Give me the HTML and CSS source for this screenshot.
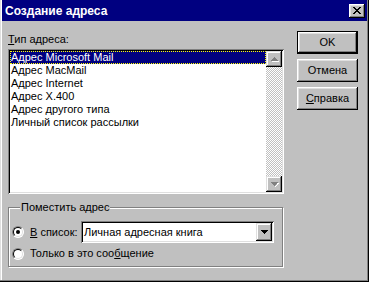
FILE: index.html
```html
<!DOCTYPE html>
<html lang="ru">
<head>
<meta charset="utf-8">
<title>Создание адреса</title>
<link rel="stylesheet" href="styles.css">
</head>
<body>
<div class="window">
  <div class="titlebar">
    <span class="title">Создание адреса</span>
    <span class="close">
      <svg width="8" height="7" viewBox="0 0 8 7" shape-rendering="crispEdges">
        <path d="M0 0h2v1H0zM6 0h2v1H6zM1 1h2v1H1zM5 1h2v1H5zM2 2h4v1H2zM3 3h2v1H3zM2 4h4v1H2zM1 5h2v1H1zM5 5h2v1H5zM0 6h2v1H0zM6 6h2v1H6z" fill="#000"/>
      </svg>
    </span>
  </div>
  <div class="body">
    <div class="left">
      <div class="label"><u>Т</u>ип адреса:</div>
      <div class="listbox">
        <ul class="items">
          <li class="sel">Адрес Microsoft Mail</li>
          <li>Адрес MacMail</li>
          <li>Адрес Internet</li>
          <li>Адрес X.400</li>
          <li>Адрес другого типа</li>
          <li>Личный список рассылки</li>
        </ul>
        <div class="vscroll">
          <div class="sbtn">
            <svg width="8" height="5" viewBox="0 0 8 5" shape-rendering="crispEdges">
              <path d="M4 1h1v1h1v1h1v1h1v1H1V4h6V3H6V2H5z" fill="#fff"/>
              <path d="M3 0h1v1h1v1h1v1h1v1H0V3h1V2h1V1h1z" fill="#808080"/>
            </svg>
          </div>
          <div class="track"></div>
          <div class="sbtn">
            <svg width="8" height="5" viewBox="0 0 8 5" shape-rendering="crispEdges">
              <path d="M1 1h7v1H7v1H6v1H5v1H4V4h1V3h1V2h1z" fill="#fff"/>
              <path d="M0 0h7v1H6v1H5v1H4v1H3V3H2V2H1V1H0z" fill="#808080"/>
            </svg>
          </div>
        </div>
      </div>
      <fieldset class="group">
        <legend>Поместить адрес</legend>
        <div class="row r1">
          <span class="radio checked"></span>
          <span class="rlabel fixed"><u>В</u> список:</span>
          <div class="combo">
            <span class="ctext">Личная адресная книга</span>
            <span class="cbtn">
              <svg width="7" height="4" viewBox="0 0 7 4" shape-rendering="crispEdges">
                <path d="M0 0h7v1H6v1H5v1H4v1H3V3H2V2H1V1H0z" fill="#000"/>
              </svg>
            </span>
          </div>
        </div>
        <div class="row r2">
          <span class="radio"></span>
          <span class="rlabel">Только в это соо<u>б</u>щение</span>
        </div>
      </fieldset>
    </div>
    <div class="right">
      <div class="btn default">OK</div>
      <div class="btn">Отмена</div>
      <div class="btn"><span><u>С</u>правка</span></div>
    </div>
  </div>
</div>
</body>
</html>
```

FILE: styles.css
```css
* { box-sizing: border-box; }

body {
  margin: 0;
  font-family: "Liberation Sans", Arial, sans-serif;
  font-size: 11px;
  color: #000;
  background: #c0c0c0;
}

u { text-decoration: underline; text-underline-offset: 1px; }

.window {
  width: 369px;
  height: 282px;
  background: #c0c0c0;
  padding: 0 2px 2px 2px;
  box-shadow: inset -1px -1px #000, inset -2px -2px #808080, inset 1px 0 #dfdfdf, inset 2px 0 #fff;
  display: flex;
  flex-direction: column;
}

.titlebar {
  height: 21px;
  background: #000080;
  color: #fff;
  display: flex;
  align-items: center;
  justify-content: space-between;
  padding: 0 2px 0 3px;
  flex: none;
}

.title {
  font-weight: bold;
  font-size: 12px;
  line-height: 14px;
  padding-top: 1px;
}

.close {
  width: 16px;
  height: 14px;
  background: #c0c0c0;
  box-shadow: inset -1px -1px #000, inset 1px 1px #fff, inset -2px -2px #808080, inset 2px 2px #dfdfdf;
  display: flex;
  align-items: center;
  justify-content: center;
  padding-left: 0;
}
.close svg { display: block; margin-left: -1px; }

.body {
  display: flex;
  padding: 10px 0 0 6px;
}

.left {
  width: 276px;
  display: flex;
  flex-direction: column;
}

.label {
  line-height: 13px;
  margin-top: 2px;
  padding-left: 0;
}

.listbox {
  margin-top: 3px;
  height: 145px;
  padding: 2px;
  background: #fff;
  box-shadow: inset 1px 1px #808080, inset -1px -1px #fff, inset 2px 2px #000, inset -2px -2px #dfdfdf;
  display: flex;
}

.items {
  list-style: none;
  margin: 0;
  padding: 0;
  flex: 1;
}

.items li {
  height: 13px;
  line-height: 13px;
  padding-left: 1px;
  white-space: nowrap;
}

.items li.sel {
  background: #000080;
  color: #fff;
  outline: 1px dotted #ffff00;
  outline-offset: -1px;
}

.vscroll {
  width: 16px;
  display: flex;
  flex-direction: column;
}

.sbtn {
  height: 16px;
  flex: none;
  background: #c0c0c0;
  box-shadow: inset -1px -1px #000, inset 1px 1px #dfdfdf, inset -2px -2px #808080, inset 2px 2px #fff;
  display: flex;
  align-items: center;
  justify-content: center;
}
.sbtn svg { display: block; margin-left: 1px; }

.track {
  flex: 1;
  background-color: #c0c0c0;
  background-image: conic-gradient(#fff 25%, #c0c0c0 0 50%, #fff 0 75%, #c0c0c0 0);
  background-size: 2px 2px;
}

.group {
  margin: 7px 0 0 0;
  padding: 7px 0 6px 3px;
  border: 1px solid #808080;
  width: 275px;
  box-shadow: 1px 1px 0 #fff, inset 1px 1px 0 #fff;
  min-width: 0;
}

.group legend {
  margin-left: 8px;
  padding: 0 1px;
  line-height: 13px;
  background: #c0c0c0;
}

.row {
  display: flex;
  align-items: center;
}

.r1 { height: 22px; }
.r2 { height: 13px; margin-top: 4px; }

.radio {
  width: 12px;
  height: 12px;
  border-radius: 50%;
  flex: none;
  border: 1px solid;
  border-color: #808080 #fff #fff #808080;
  transform: rotate(0deg);
  position: relative;
  background: #fff;
}
.radio::before {
  content: "";
  position: absolute;
  inset: 0;
  border-radius: 50%;
  border: 1px solid;
  border-color: #000 #dfdfdf #dfdfdf #000;
}
.radio.checked::after {
  content: "";
  position: absolute;
  left: 3px;
  top: 3px;
  width: 4px;
  height: 4px;
  border-radius: 50%;
  background: #000;
}

.rlabel {
  margin-left: 6px;
  line-height: 13px;
  white-space: nowrap;
}
.rlabel.fixed { width: 51px; }

.combo {
  width: 193px;
  height: 22px;
  background: #fff;
  padding: 2px;
  box-shadow: inset 1px 1px #808080, inset -1px -1px #fff, inset 2px 2px #000, inset -2px -2px #dfdfdf;
  display: flex;
  align-items: stretch;
}

.ctext {
  flex: 1;
  line-height: 18px;
  padding-left: 1px;
  white-space: nowrap;
}

.cbtn {
  width: 16px;
  background: #c0c0c0;
  box-shadow: inset -1px -1px #000, inset 1px 1px #dfdfdf, inset -2px -2px #808080, inset 2px 2px #fff;
  display: flex;
  align-items: center;
  justify-content: center;
}
.cbtn svg { display: block; }

.right {
  margin-left: 13px;
  display: flex;
  flex-direction: column;
  gap: 5px;
}

.btn {
  width: 61px;
  height: 23px;
  background: #c0c0c0;
  box-shadow: inset -1px -1px #000, inset 1px 1px #fff, inset -2px -2px #808080, inset 2px 2px #dfdfdf;
  display: flex;
  align-items: center;
  justify-content: center;
  line-height: 13px;
}

.btn.default {
  box-shadow: inset 0 0 0 1px #000, inset -2px -2px #000, inset 2px 2px #fff, inset -3px -3px #808080, inset 3px 3px #dfdfdf;
}
```
